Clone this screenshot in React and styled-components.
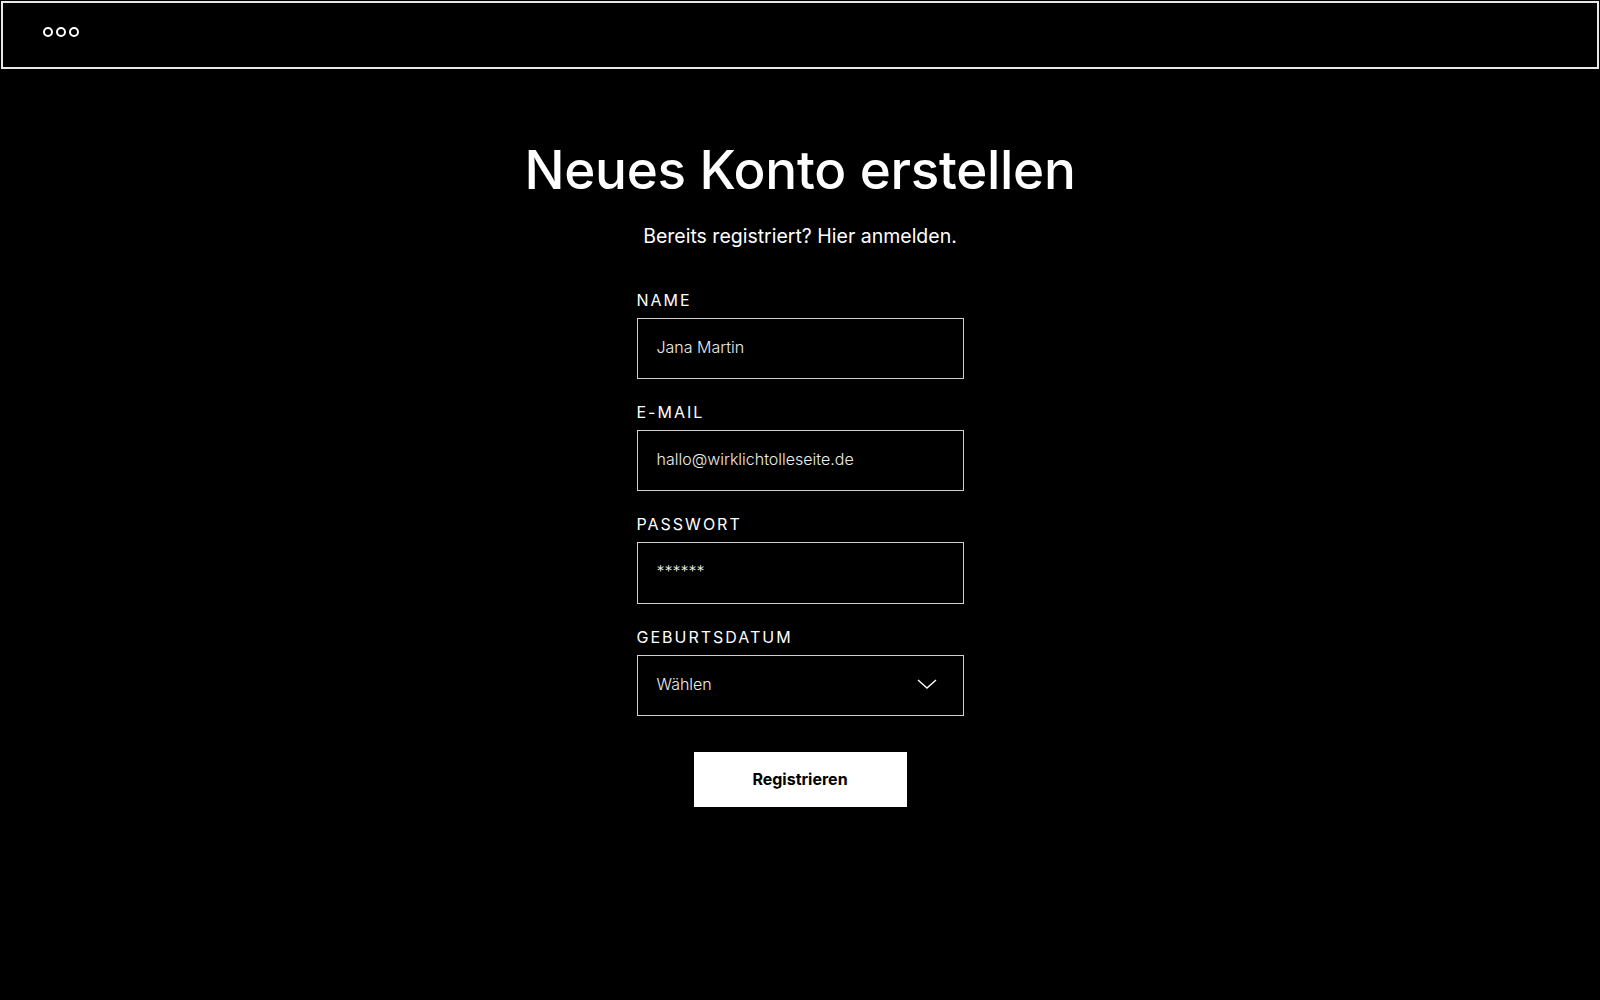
import React from "react";
import styled, { createGlobalStyle } from "styled-components";

const GlobalStyle = createGlobalStyle`
	html, body {
		margin: 0;
		padding: 0;
		background: #000;
	}
	body {
		font-family: Inter, "Noto Sans", sans-serif;
		color: #fff;
	}
	* {
		box-sizing: border-box;
	}
`;

const Page = styled.div`
	min-height: 1000px;
	background: #000;
	padding-top: 1px;
`;

const TopBar = styled.header`
	display: flex;
	align-items: center;
	height: 68px;
	margin: 0 1px;
	padding: 0 0 0 40px;
	border: 2px solid #e8e8e8;
`;

const Dots = styled.div`
	display: flex;
	gap: 3px;
	margin-top: -7px;
`;

const Dot = styled.span`
	width: 10px;
	height: 10px;
	border: 2px solid #fff;
	border-radius: 50%;
`;

const Main = styled.main`
	display: flex;
	flex-direction: column;
	align-items: center;
	padding-top: 70px;
`;

const Title = styled.h1`
	margin: 0;
	font-size: 53px;
	font-weight: 500;
	line-height: 1.2;
	letter-spacing: -0.3px;
	color: #fff;
`;

const Subtitle = styled.p`
	margin: 20px 0 0;
	font-size: 19.5px;
	line-height: 26px;
	color: #fff;
`;

const Form = styled.form`
	display: flex;
	flex-direction: column;
	gap: 21px;
	width: 327px;
	margin-top: 39px;
`;

const Field = styled.label`
	display: flex;
	flex-direction: column;
	gap: 6px;
`;

const Label = styled.span`
	font-size: 16px;
	line-height: 24px;
	letter-spacing: 2px;
	text-transform: uppercase;
	color: #fff;
`;

const Input = styled.input`
	height: ${(p) => p.$h || 61}px;
	padding: 0 19px 3px;
	background: #000;
	border: 1.5px solid #cfcfcf;
	border-radius: 0;
	outline: none;
	font-family: Inter, "Noto Sans", sans-serif;
	font-size: 16px;
	font-weight: 300;
	color: #ececec;
`;

const Select = styled.div`
	display: flex;
	align-items: center;
	justify-content: space-between;
	height: 61px;
	padding: 0 26px 2px 19px;
	border: 1.5px solid #cfcfcf;
	font-size: 16px;
	font-weight: 300;
	color: #ececec;
`;

const Chevron = () => (
	<svg width="20" height="10" viewBox="0 0 20 10" fill="none">
		<polyline points="1,1 10,9 19,1" stroke="#fff" strokeWidth="1.4" />
	</svg>
);

const SubmitBtn = styled.button`
	align-self: center;
	width: 213px;
	height: 55px;
	margin-top: 15px;
	border: none;
	background: #fff;
	color: #000;
	font-family: Inter, "Noto Sans", sans-serif;
	font-size: 16px;
	font-weight: 700;
	cursor: pointer;
`;

const App = () => {
	return (
		<Page>
			<GlobalStyle />
			<TopBar>
				<Dots>
					<Dot />
					<Dot />
					<Dot />
				</Dots>
			</TopBar>
			<Main>
				<Title>Neues Konto erstellen</Title>
				<Subtitle>Bereits registriert? Hier anmelden.</Subtitle>
				<Form onSubmit={(e) => e.preventDefault()}>
					<Field>
						<Label>Name</Label>
						<Input type="text" defaultValue="Jana Martin" />
					</Field>
					<Field>
						<Label>E-Mail</Label>
						<Input type="text" defaultValue="hallo@wirklichtolleseite.de" />
					</Field>
					<Field>
						<Label>Passwort</Label>
						<Input type="text" defaultValue="******" $h={62} />
					</Field>
					<Field>
						<Label>Geburtsdatum</Label>
						<Select>
							<span>Wählen</span>
							<Chevron />
						</Select>
					</Field>
					<SubmitBtn type="submit">Registrieren</SubmitBtn>
				</Form>
			</Main>
		</Page>
	);
};

export default App;
